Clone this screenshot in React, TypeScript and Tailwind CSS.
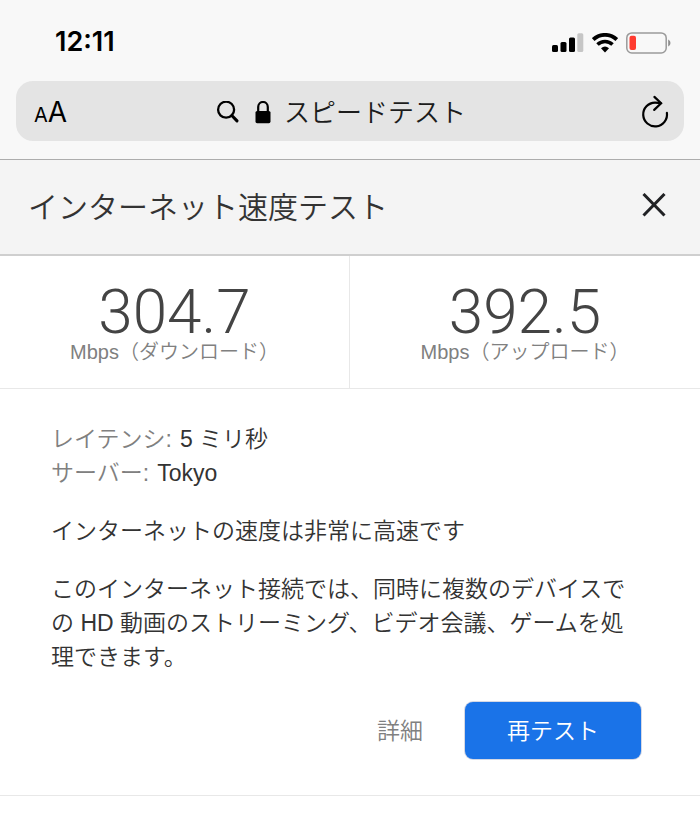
import type { ReactNode } from 'react';

const results = [
  { value: '304.7', label: 'Mbps（ダウンロード）' },
  { value: '392.5', label: 'Mbps（アップロード）' },
];

const details = [
  { term: 'レイテンシ:', value: '5 ミリ秒' },
  { term: 'サーバー:', value: 'Tokyo' },
];

function StatusBar() {
  return (
    <div className="flex h-[81px] items-center justify-between pt-1 pr-7 pl-[55px]">
      <span className="font-['Inter',sans-serif] text-[27px] font-semibold text-black">12:11</span>
      <div className="flex items-center gap-2">
        <svg width="32" height="20" viewBox="0 0 32 20" aria-hidden="true">
          <rect x="0" y="12" width="6" height="7" rx="1.5" />
          <rect x="8.5" y="9" width="6" height="10" rx="1.5" />
          <rect x="17" y="4.5" width="6" height="14.5" rx="1.5" />
          <rect x="25.3" y="0.2" width="6" height="18.8" rx="1.5" fill="#c6c6c6" />
        </svg>
        <svg width="26" height="20" viewBox="0 0 26 20" aria-hidden="true">
          <path d="M1.2 6.6a17 17 0 0 1 23.6 0" fill="none" stroke="#000" strokeWidth="3.8" />
          <path d="M5.5 11.5a10.8 10.8 0 0 1 15 0" fill="none" stroke="#000" strokeWidth="3.6" />
          <path d="M9 15.3a6.2 6.2 0 0 1 8 0L13 19.4z" />
        </svg>
        <svg width="46" height="22" viewBox="0 0 46 22" aria-hidden="true">
          <rect x="0.8" y="0.9" width="39.4" height="20" rx="5" fill="none" stroke="#9a9a9a" strokeWidth="1.5" />
          <rect x="3.5" y="3.8" width="6.5" height="14.2" rx="2" fill="#ff3b30" />
          <path d="M42.2 7.5c3 1.4 3 5.6 0 7z" fill="#8e8e8e" />
        </svg>
      </div>
    </div>
  );
}

function AddressBar() {
  return (
    <div className="px-4 pb-[18px]">
      <div className="flex h-[60px] items-center justify-between rounded-[17px] bg-[#e4e4e4] pt-1 pr-4 pl-[18px] text-black">
        <button
          type="button"
          aria-label="表示オプション"
          className="w-8 text-left font-['Inter',sans-serif] leading-none whitespace-nowrap"
        >
          <span className="text-xl">A</span>
          <span className="text-[28px]">A</span>
        </button>
        <button type="button" className="flex items-center">
          <svg width="24" height="24" viewBox="0 0 24 24" fill="none" stroke="#000" aria-hidden="true">
            <circle cx="10.1" cy="8.7" r="8" strokeWidth="2.3" />
            <path d="m15.8 14.5 5.2 5.3" strokeWidth="3.1" strokeLinecap="round" />
          </svg>
          <svg className="mr-3 ml-3.5" width="18" height="24" viewBox="0 0 18 24" aria-hidden="true">
            <path d="M4.2 11V6a4.8 5 0 0 1 9.6 0v5" fill="none" stroke="#000" strokeWidth="2.2" />
            <rect x="1.5" y="10" width="15" height="12.2" rx="1.6" />
          </svg>
          <span className="text-[26px] font-[350] text-[#1c1c1c]">スピードテスト</span>
        </button>
        <button type="button" aria-label="再読み込み" className="flex w-[52px] justify-end">
          <svg
            className="overflow-visible"
            width="26"
            height="32"
            viewBox="0 0 26 32"
            fill="none"
            stroke="#000"
            strokeWidth="2.2"
            strokeLinecap="round"
            aria-hidden="true"
          >
            <path d="M24.9 15.8A11.9 11.9 0 1 1 13 5.6c2 0 4 .1 5.8.6" />
            <path d="m12.4 -.1 6.7 6.4-6.9 6.6" />
          </svg>
        </button>
      </div>
    </div>
  );
}

function Text({ children }: { children: ReactNode }) {
  return <p className="mt-6">{children}</p>;
}

export default function App() {
  return (
    <div className="min-h-screen bg-white font-['Liberation_Sans','Noto_Sans_CJK_JP',sans-serif] text-[#333]" lang="ja">
      <header className="border-b border-[#adadad] bg-[#f8f8f8]">
        <StatusBar />
        <AddressBar />
      </header>

      <main>
        <div className="flex h-24 items-center justify-between border-b-2 border-[#cfcfcf] bg-[#f4f4f4] pr-8 pl-7">
          <h1 className="text-[30px] font-[350]">インターネット速度テスト</h1>
          <button type="button" aria-label="閉じる">
            <svg width="28" height="28" viewBox="0 0 28 28" stroke="#202124" strokeWidth="3" aria-hidden="true">
              <path d="m3.5 1 21 21.5M24.5 1l-21 21.5" />
            </svg>
          </button>
        </div>

        <div className="grid grid-cols-2 divide-x divide-[#e8e8e8] border-b border-[#e8e8e8]">
          {results.map((result) => (
            <div key={result.label} className="flex flex-col items-center py-[26px]">
              <span className="font-['Roboto',sans-serif] text-[62px] leading-[60px] font-light text-[#444]">
                {result.value}
              </span>
              <span className="text-xl leading-5 font-[350] whitespace-nowrap text-[#808080]">
                {result.label}
              </span>
            </div>
          ))}
        </div>

        <section className="border-b border-[#e8e8e8] pt-[33px] pr-[59px] pb-9 pl-[51px] text-[23px] leading-[34px] font-[350]">
          <dl>
            {details.map((item) => (
              <div key={item.term} className="flex gap-2">
                <dt className="text-[#808080]">{item.term}</dt>
                <dd>{item.value}</dd>
              </div>
            ))}
          </dl>
          <Text>インターネットの速度は非常に高速です</Text>
          <Text>
            このインターネット接続では、同時に複数のデバイスでの HD 動画のストリーミング、ビデオ会議、ゲームを処理できます。
          </Text>
          <div className="mt-7 flex items-center justify-end gap-[42px]">
            <button type="button" className="text-[#808080]">
              詳細
            </button>
            <button
              type="button"
              className="h-[57px] rounded-lg bg-[#1a73e8] px-[42px] text-white ring-1 ring-[#d5d8e4]"
            >
              再テスト
            </button>
          </div>
        </section>
      </main>
    </div>
  );
}
